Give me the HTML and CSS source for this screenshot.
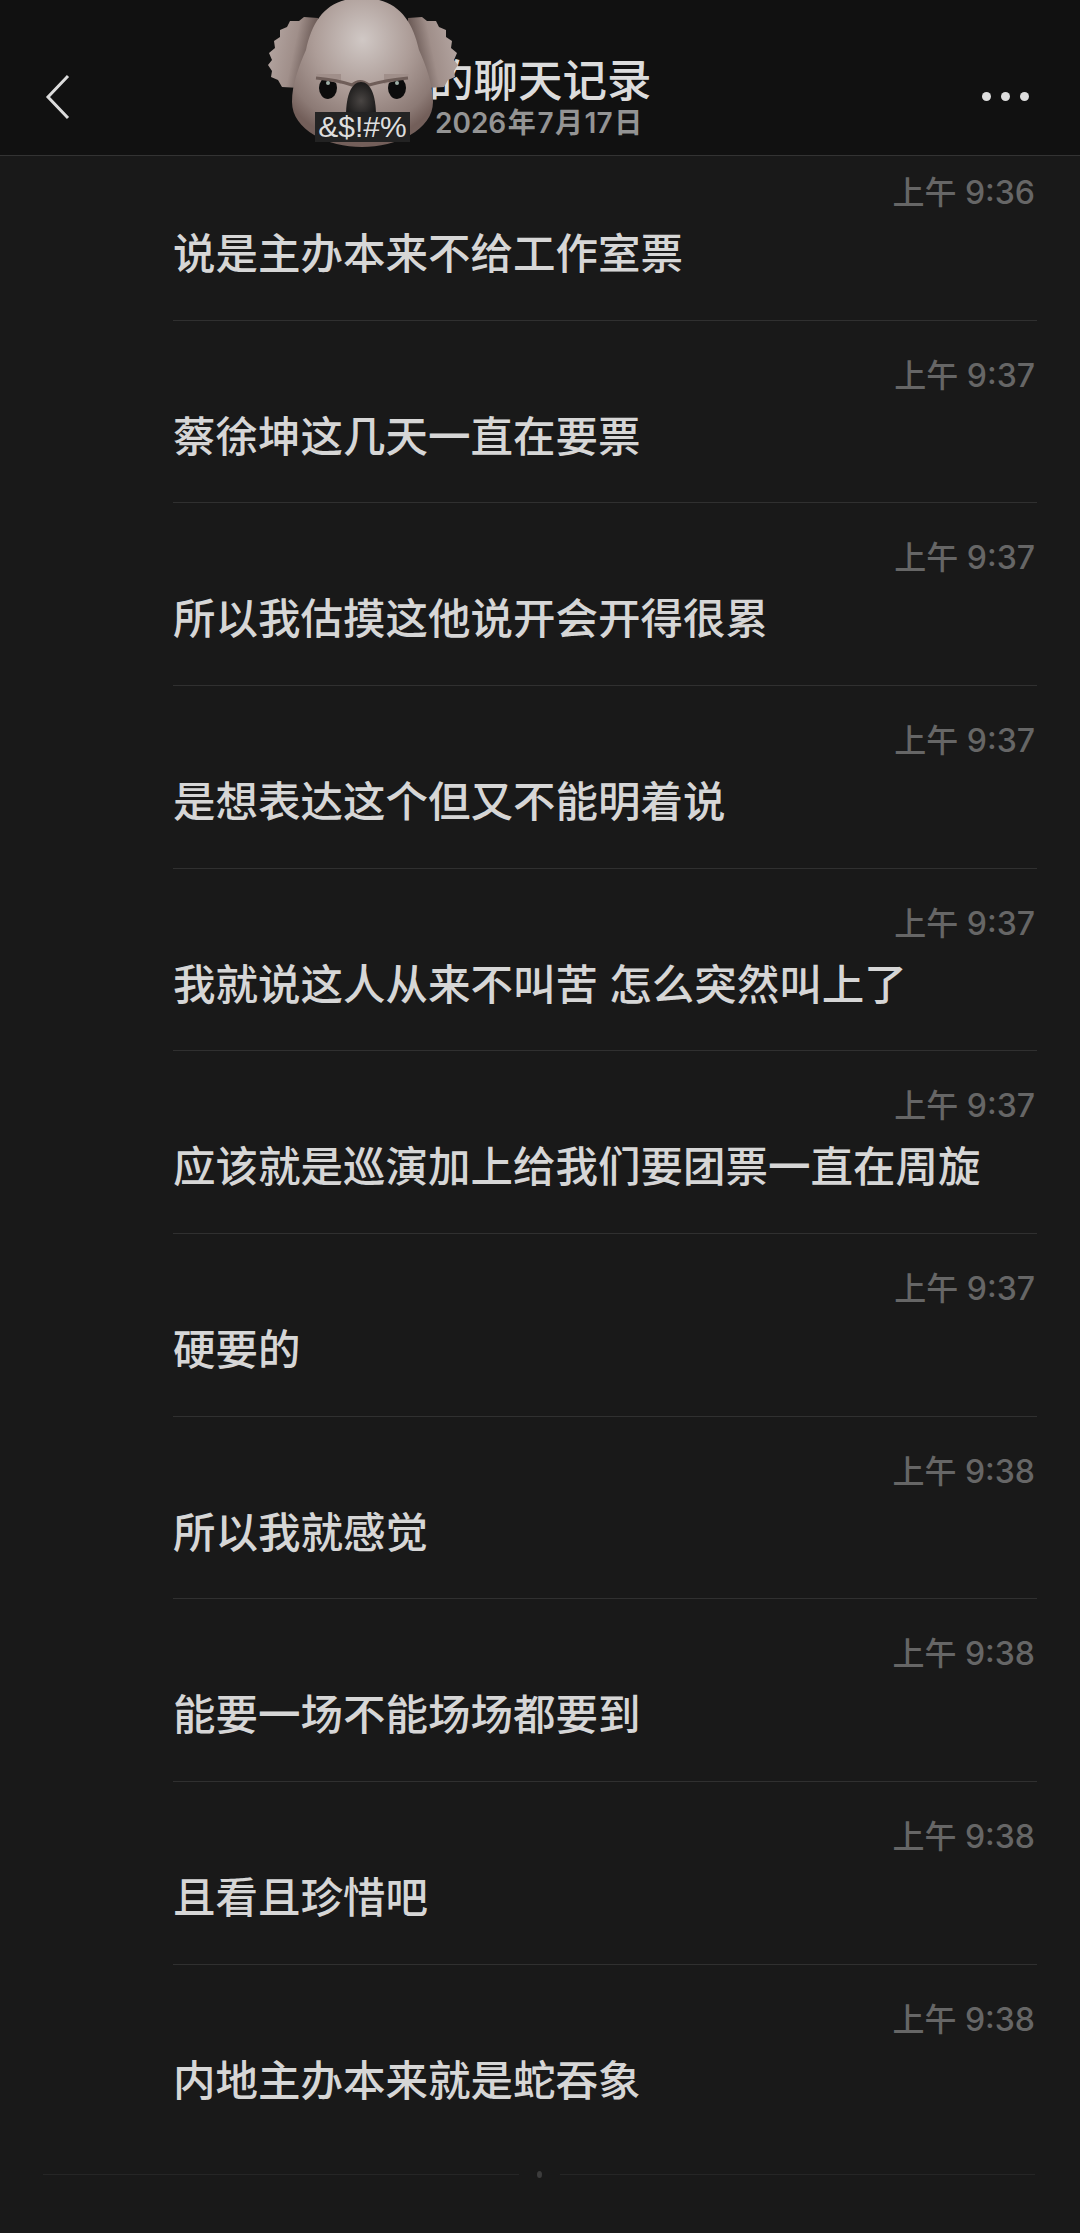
FILE: index.html
```html
<!DOCTYPE html>
<html lang="zh-CN">
<head>
  <meta charset="UTF-8">
  <title>的聊天记录</title>
  <link rel="stylesheet" href="styles.css">
</head>
<body>
  <header class="topbar">
    <svg class="back-icon" width="26" height="46" viewBox="0 0 26 46">
      <path d="M23 2 L3 23 L23 44" fill="none" stroke="#dcdcdc" stroke-width="3"/>
    </svg>
    <div class="title-box">
      <div class="title">的聊天记录</div>
      <div class="date">2026 年 7 月 17 日</div>
    </div>
    <div class="more">
      <span></span><span></span><span></span>
    </div>
    <!-- 盖在标题上的考拉头像 -->
    <div class="koala">
      <svg width="196" height="150" viewBox="0 0 196 150">
        <defs>
          <radialGradient id="headFill" cx="50%" cy="28%" r="68%">
            <stop offset="0%" stop-color="#d0c8c5"/>
            <stop offset="50%" stop-color="#ad9d98"/>
            <stop offset="85%" stop-color="#8c7a75"/>
            <stop offset="100%" stop-color="#735f5a"/>
          </radialGradient>
          <linearGradient id="earLeft" x1="0" y1="0" x2="1" y2="0.3">
            <stop offset="0%" stop-color="#b8aaa6"/>
            <stop offset="60%" stop-color="#a08f8a"/>
            <stop offset="100%" stop-color="#5f4e4a"/>
          </linearGradient>
          <linearGradient id="earRight" x1="1" y1="0" x2="0" y2="0.3">
            <stop offset="0%" stop-color="#b8aaa6"/>
            <stop offset="60%" stop-color="#a08f8a"/>
            <stop offset="100%" stop-color="#5f4e4a"/>
          </linearGradient>
          <radialGradient id="noseFill" cx="50%" cy="55%" r="60%">
            <stop offset="0%" stop-color="#494543"/>
            <stop offset="100%" stop-color="#171616"/>
          </radialGradient>
        </defs>
        <path d="M52 18 L38 17 L33 21 L24 21 L21 27 L14 30 L14 37 L8 41 L9 48 L3 53 L6 60 L2 65 L6 71 L5 77 L12 80 L16 87 L34 88 L52 50 Z" fill="url(#earLeft)"/>
        <path d="M142 18 L156 17 L161 21 L170 21 L173 27 L180 30 L180 37 L186 41 L185 48 L191 53 L188 60 L192 65 L188 71 L189 77 L182 80 L178 87 L160 88 L142 50 Z" fill="url(#earRight)"/>
        <path d="M96 -2 C130 -2 146 18 153 50 C160 66 167 84 167 102 C167 130 130 147 96 147 C62 147 26 130 26 102 C26 84 33 66 40 50 C47 18 62 -2 96 -2 Z" fill="url(#headFill)"/>
        <ellipse cx="62" cy="88" rx="9" ry="11" fill="#0c0c0c"/>
        <ellipse cx="131" cy="88" rx="9" ry="11" fill="#0c0c0c"/>
        <path d="M50 74 L75 74 L75 84 L52 78 Z" fill="#a08f8a"/>
        <path d="M143 74 L118 74 L118 84 L141 78 Z" fill="#a08f8a"/>
        <path d="M50 78 Q72 80 86 85 Q94 78 103 85 Q120 80 142 78" fill="none" stroke="#6f5e59" stroke-width="3"/>
        <circle cx="62" cy="83" r="2" fill="#9fb0a8"/>
        <circle cx="131" cy="83" r="2" fill="#9fb0a8"/>
        <path d="M95 82 C104 82 110 94 110 116 L80 116 C80 94 86 82 95 82 Z" fill="url(#noseFill)"/>
      </svg>
      <div class="censor">&amp;$!#%</div>
    </div>
  </header>

  <main class="list">
    <div class="row">
      <div class="time">上午 9:36</div>
      <div class="msg">说是主办本来不给工作室票</div>
    </div>
    <div class="row">
      <div class="time">上午 9:37</div>
      <div class="msg">蔡徐坤这几天一直在要票</div>
    </div>
    <div class="row">
      <div class="time">上午 9:37</div>
      <div class="msg">所以我估摸这他说开会开得很累</div>
    </div>
    <div class="row">
      <div class="time">上午 9:37</div>
      <div class="msg">是想表达这个但又不能明着说</div>
    </div>
    <div class="row">
      <div class="time">上午 9:37</div>
      <div class="msg">我就说这人从来不叫苦 怎么突然叫上了</div>
    </div>
    <div class="row">
      <div class="time">上午 9:37</div>
      <div class="msg">应该就是巡演加上给我们要团票一直在周旋</div>
    </div>
    <div class="row">
      <div class="time">上午 9:37</div>
      <div class="msg">硬要的</div>
    </div>
    <div class="row">
      <div class="time">上午 9:38</div>
      <div class="msg">所以我就感觉</div>
    </div>
    <div class="row">
      <div class="time">上午 9:38</div>
      <div class="msg">能要一场不能场场都要到</div>
    </div>
    <div class="row">
      <div class="time">上午 9:38</div>
      <div class="msg">且看且珍惜吧</div>
    </div>
    <div class="row">
      <div class="time">上午 9:38</div>
      <div class="msg">内地主办本来就是蛇吞象</div>
    </div>
  </main>

  <div class="end-line">
    <span class="end-rule"></span>
    <span class="end-dot"></span>
    <span class="end-rule"></span>
  </div>
</body>
</html>
```
FILE: styles.css
```css
body {
  margin: 0;
  background: #191919;
  font-family: "Inter", "Noto Sans CJK SC", sans-serif;
  color: #d6d6d6;
  overflow: hidden;
}

/* 顶部栏 */
.topbar {
  position: relative;
  height: 155px;
  background: #111111;
  border-bottom: 1px solid #333333;
  display: flex;
  align-items: center;
  padding: 0 51px 0 45px;
  justify-content: space-between;
}
.back-icon {
  display: block;
  margin-top: 39px;
}
.title-box {
  position: absolute;
  left: 429px;
  top: 55px;
}
.title {
  font-size: 44.5px;
  line-height: 52px;
  font-weight: 500;
  color: #dcdcdc;
  white-space: nowrap;
}
.date {
  margin: -1px 0 0 6px;
  font-size: 28px;
  line-height: 34px;
  font-weight: 600;
  color: #949494;
  word-spacing: -5.5px;
  white-space: nowrap;
}
.more {
  display: flex;
  gap: 10px;
  margin-top: 38px;
}
.more span {
  width: 9px;
  height: 9px;
  border-radius: 50%;
  background: #dedede;
}

/* 考拉头像 */
.koala {
  position: absolute;
  left: 266px;
  top: 0;
  width: 196px;
  height: 150px;
}
.koala svg {
  display: block;
}
.censor {
  position: absolute;
  left: 49px;
  top: 112px;
  width: 95px;
  height: 30px;
  background: #232323;
  color: #dedede;
  font-family: "Liberation Sans", sans-serif;
  font-size: 30px;
  line-height: 30px;
  text-align: center;
  white-space: nowrap;
}

/* 聊天记录列表 */
.list {
  padding: 0 43px 0 173px;
}
.row {
  padding: 35px 0 34.67px;
  border-bottom: 1px solid #303030;
}
.row:first-child {
  padding-top: 17px;
}
.row:last-child {
  border-bottom: none;
}
.time {
  font-size: 32px;
  line-height: 40px;
  font-weight: 500;
  text-align: right;
  color: #666666;
  padding-right: 2px;
}
.msg {
  margin-top: 10px;
  font-size: 42.5px;
  line-height: 62px;
  font-weight: 500;
  color: #d6d6d6;
  white-space: nowrap;
}

/* 底部分隔 */
.end-line {
  display: flex;
  align-items: center;
  gap: 18px;
  margin: 25px 45px 0 43px;
}
.end-rule {
  flex: 1;
  height: 1px;
  background: #262626;
}
.end-dot {
  width: 5px;
  height: 7px;
  border-radius: 50%;
  background: #3c3c3c;
}
```
